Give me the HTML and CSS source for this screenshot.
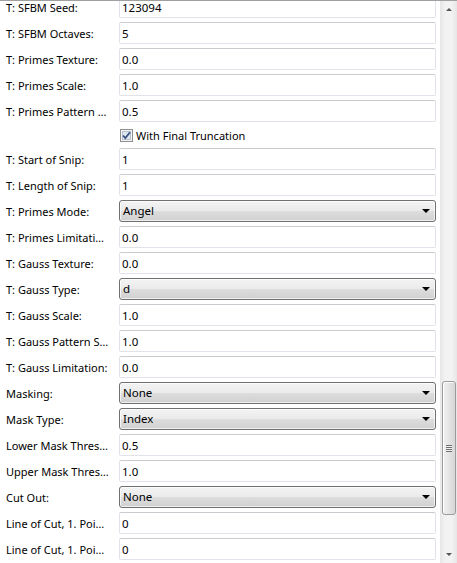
FILE: index.html
```html
<!DOCTYPE html>
<html lang="en">
<head>
    <meta charset="UTF-8">
    <meta name="viewport" content="width=device-width, initial-scale=1.0">
    <title>Properties</title>
    <link rel="stylesheet" href="styles.css">
</head>
<body>
    <div class="panel">
        <div class="props">
            <div class="list">
                <div class="row"><label>T: SFBM Seed:</label><input class="field" value="123094"></div>
                <div class="row"><label>T: SFBM Octaves:</label><input class="field" value="5"></div>
                <div class="row"><label>T: Primes Texture:</label><input class="field" value="0.0"></div>
                <div class="row"><label>T: Primes Scale:</label><input class="field" value="1.0"></div>
                <div class="row"><label>T: Primes Pattern Size:</label><input class="field" value="0.5"></div>
                <div class="row check-row">
                    <span class="check">
                        <svg width="13" height="13" viewBox="0 0 13 13">
                            <rect x="0.5" y="0.5" width="12" height="12" fill="#f4f4f4" stroke="#8e8f8f"/>
                            <rect x="2.5" y="2.5" width="8" height="8" fill="#dfe6ee" stroke="#b9c3cf"/>
                            <path d="M3 6.5 L5.3 9 L10 3.2" fill="none" stroke="#3c5483" stroke-width="1.8"/>
                        </svg>
                    </span>
                    <span>With Final Truncation</span>
                </div>
                <div class="row"><label>T: Start of Snip:</label><input class="field" value="1"></div>
                <div class="row"><label>T: Length of Snip:</label><input class="field" value="1"></div>
                <div class="row"><label>T: Primes Mode:</label><div class="select">Angel<i class="arrow"></i></div></div>
                <div class="row"><label>T: Primes Limitation:</label><input class="field" value="0.0"></div>
                <div class="row"><label>T: Gauss Texture:</label><input class="field" value="0.0"></div>
                <div class="row"><label>T: Gauss Type:</label><div class="select">d<i class="arrow"></i></div></div>
                <div class="row"><label>T: Gauss Scale:</label><input class="field" value="1.0"></div>
                <div class="row"><label>T: Gauss Pattern Size:</label><input class="field" value="1.0"></div>
                <div class="row"><label>T: Gauss Limitation:</label><input class="field" value="0.0"></div>
                <div class="row"><label>Masking:</label><div class="select">None<i class="arrow"></i></div></div>
                <div class="row"><label>Mask Type:</label><div class="select">Index<i class="arrow"></i></div></div>
                <div class="row"><label>Lower Mask Threshold:</label><input class="field" value="0.5"></div>
                <div class="row"><label>Upper Mask Threshold:</label><input class="field" value="1.0"></div>
                <div class="row"><label>Cut Out:</label><div class="select">None<i class="arrow"></i></div></div>
                <div class="row"><label>Line of Cut, 1. Point X:</label><input class="field" value="0"></div>
                <div class="row"><label>Line of Cut, 1. Point Y:</label><input class="field" value="0"></div>
            </div>
        </div>
        <div class="scrollbar">
            <i class="btn-up"></i>
            <div class="track">
                <div class="thumb"><span class="grip"></span></div>
            </div>
            <i class="btn-down"></i>
        </div>
    </div>
</body>
</html>
```

FILE: styles.css
```css
body {
    margin: 0;
    background: #ffffff;
    font-family: "Noto Sans", "Liberation Sans", sans-serif;
    font-size: 11px;
    color: #000000;
}
.panel {
    display: flex;
    height: 562px;
    border-top: 1px solid #a0a0a0;
    overflow: hidden;
}
.props {
    flex: 1;
    overflow: hidden;
}
.list {
    margin-top: -7px;
}
.row {
    display: flex;
    align-items: center;
    height: 26px;
}
.row label {
    width: 103px;
    padding: 0 10px 0 6px;
    white-space: nowrap;
    overflow: hidden;
    text-overflow: ellipsis;
    flex: none;
}
.field {
    width: 317px;
    height: 22px;
    box-sizing: border-box;
    margin: 0;
    padding: 0 2px;
    border: 1px solid #e2e3ea;
    border-top-color: #c9cacf;
    border-radius: 2px;
    font: inherit;
    font-size: 11.5px;
    color: #000000;
    background: #ffffff;
}
.check-row {
    height: 22px;
    padding-left: 120px;
    gap: 3px;
}
.check {
    display: flex;
    width: 13px;
    height: 13px;
}
.select {
    position: relative;
    width: 317px;
    height: 22px;
    box-sizing: border-box;
    padding: 0 3px;
    line-height: 20px;
    font-size: 11.5px;
    border: 1px solid #707070;
    border-radius: 3px;
    background: linear-gradient(#f3f3f3 0%, #ebebeb 48%, #dddddd 52%, #d0d0d0 100%);
    box-shadow: inset 0 0 0 1px rgba(255, 255, 255, 0.7);
}
.arrow {
    position: absolute;
    right: 5px;
    top: 8px;
    width: 0;
    height: 0;
    border-left: 4px solid transparent;
    border-right: 4px solid transparent;
    border-top: 4px solid #000000;
}
.scrollbar {
    width: 17px;
    margin-left: 4px;
    display: flex;
    flex-direction: column;
    background: linear-gradient(90deg, #e6e6e6, #f2f2f2 30%, #f2f2f2 70%, #e6e6e6);
}
.btn-up,
.btn-down {
    height: 17px;
    flex: none;
    display: flex;
    justify-content: center;
    align-items: center;
}
.btn-up::before,
.btn-down::before {
    content: "";
    border-left: 3px solid transparent;
    border-right: 3px solid transparent;
}
.btn-up::before {
    border-bottom: 3px solid #555555;
}
.btn-down::before {
    border-top: 3px solid #555555;
}
.track {
    flex: 1;
    display: flex;
    flex-direction: column;
    justify-content: flex-end;
    padding-bottom: 31px;
}
.thumb {
    height: 132px;
    margin: 0 1px 0 2px;
    border: 1px solid #9b9b9b;
    border-radius: 3px;
    background: linear-gradient(90deg, #f1f1f1, #e4e4e4 50%, #d6d6d6);
    box-shadow: inset 1px 1px 0 #ffffff;
    display: flex;
    justify-content: center;
    align-items: center;
}
.grip {
    width: 6px;
    height: 7px;
    background: repeating-linear-gradient(#6f6f6f 0 1px, #f0f0f0 1px 2px);
}
```
